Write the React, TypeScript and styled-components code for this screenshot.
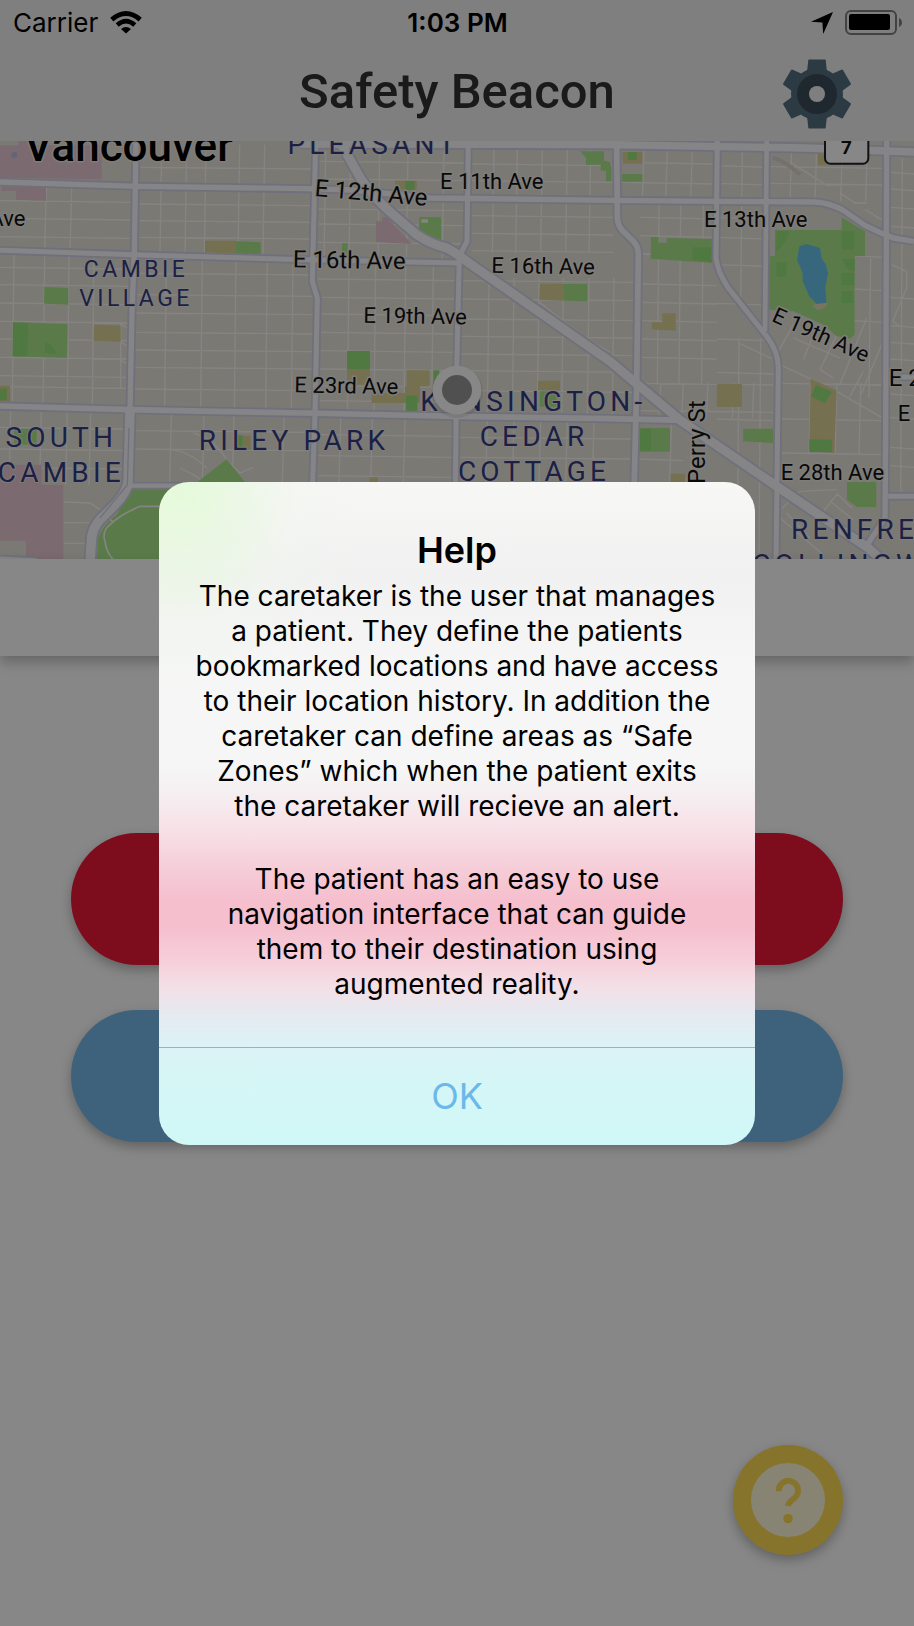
import React from "react";
import styled, { createGlobalStyle } from "styled-components";

const GlobalStyle = createGlobalStyle`
  *, *::before, *::after { box-sizing: border-box; }
  body { margin: 0; background: #fff; }
  button { border: 0; padding: 0; font: inherit; cursor: pointer; }
`;

const Screen = styled.div`
  position: relative;
  display: flex;
  flex-direction: column;
  min-height: 100vh;
  font-family: Inter, "Liberation Sans", sans-serif;
  background: #fff;
`;

const TopBar = styled.header`
  display: flex;
  flex-direction: column;
  height: 141px;
  background: #f0f0f0;
`;

const StatusBar = styled.div`
  display: grid;
  grid-template-columns: 1fr auto 1fr;
  align-items: center;
  height: 46px;
  padding: 0 12px 0 13px;
  font-size: 26px;
  line-height: 30px;
  color: #000;
`;

const StatusGroup = styled.div<{ $end?: boolean }>`
  display: flex;
  align-items: center;
  gap: 12px;
  justify-content: ${(p) => (p.$end ? "flex-end" : "flex-start")};
`;

const Clock = styled.time`
  font-weight: 600;
`;

const TitleRow = styled.div`
  display: grid;
  grid-template-columns: 1fr auto 1fr;
  align-items: center;
  flex: 1;
  padding: 0 62px;
`;

const Title = styled.h1`
  grid-column: 2;
  margin: 0;
  padding-bottom: 4px;
  font-family: Roboto, sans-serif;
  font-size: 49px;
  font-weight: 500;
  line-height: 56px;
  color: #313131;
`;

const GearButton = styled.button`
  justify-self: end;
  height: 70px;
  background: none;
`;

const MapFrame = styled.section`
  height: 418px;
  overflow: hidden;
  background: #e8e4db;

  svg {
    display: block;
    width: 100%;
    height: 100%;
  }
`;

const RoadName = styled.text<{ $size?: number }>`
  font-family: "DIN Pro", Roboto, sans-serif;
  font-size: ${(p) => p.$size ?? 66}px;
  fill: #111;
  stroke: #efece6;
  stroke-width: 9px;
  stroke-linejoin: round;
  paint-order: stroke;
`;

const AreaName = styled.text<{ $size?: number }>`
  font-family: "DIN Pro", Roboto, sans-serif;
  font-size: ${(p) => p.$size ?? 84}px;
  letter-spacing: 0.15em;
  text-anchor: middle;
  fill: #373e84;
  stroke: #efece6;
  stroke-width: 6px;
  stroke-linejoin: round;
  paint-order: stroke;
`;

const CityName = styled(RoadName)`
  font-weight: 500;
  fill: #000;
`;

const Summary = styled.section`
  height: 97px;
  background: #fff;
  box-shadow: 0 6px 12px rgba(0, 0, 0, 0.25);
`;

const Actions = styled.main`
  display: flex;
  flex-direction: column;
  gap: 45px;
  padding: 177px 71px 0;
`;

const ActionButton = styled.button<{ $color: string }>`
  height: 132px;
  border-radius: 66px;
  background: ${(p) => p.$color};
  box-shadow: 0 5px 12px rgba(0, 0, 0, 0.28);
`;

const HelpButton = styled.button`
  display: flex;
  align-items: center;
  justify-content: center;
  width: 110px;
  height: 110px;
  margin: auto 71px 71px auto;
  border-radius: 50%;
  background: #ffdb53;
  box-shadow: 0 5px 12px rgba(0, 0, 0, 0.28);
`;

const Backdrop = styled.div`
  position: absolute;
  inset: 0;
  display: flex;
  align-items: center;
  justify-content: center;
  background: rgba(0, 0, 0, 0.47);
`;

const Dialog = styled.div`
  display: flex;
  flex-direction: column;
  width: 596px;
  max-width: 90%;
  border-radius: 30px;
  overflow: hidden;
  background:
    radial-gradient(ellipse 180px 210px at 20px 10px, #e5fada 0%, rgba(232, 248, 224, 0.7) 35%, rgba(240, 247, 236, 0.35) 65%, rgba(246, 246, 246, 0) 100%),
    linear-gradient(
      #f7f7f6 0%, #f1f1f1 14%, #f6f6f6 28%, #f6f6f6 43%, #f5eff1 47%, #f7dfe6 53%,
      #f5cbd6 59%, #f5bfce 63%, #f5bfce 67%, #f6ced9 72%, #f4dfe6 76%,
      #e6e9f0 80%, #dcf2f6 85%, #d6f6f6 90%, #d0f8f7 100%
    );
`;

const DialogBody = styled.div`
  padding: 45px 36px;
  text-align: center;
  color: #000;
`;

const DialogTitle = styled.h2`
  margin: 0 0 6px;
  font-size: 36px;
  font-weight: 600;
  line-height: 46px;
`;

const DialogText = styled.p`
  margin: 0;
  font-size: 28px;
  line-height: 35px;

  & + & {
    margin-top: 38px;
  }
`;

const ConfirmButton = styled.button`
  height: 98px;
  border-top: 1px solid #6cc4d8;
  background: none;
  font-size: 36px;
  line-height: 44px;
  color: #6cb8ea;
`;

/* Arterial roads, drawn as a casing under a lighter core. */
const arterials: { d: string; w: number }[] = [
  { d: "M0 132L415 145L915 152L1060 156L1290 180L1830 187L2145 190L2445 192Q2490 195 2530 217L2595 262Q2640 285 2680 300L2742 310", w: 16 },
  { d: "M0 337L400 350L915 365L1380 375", w: 15 },
  { d: "M900 18L1830 20L2415 30L2742 42", w: 22 },
  { d: "M0 804L390 815L640 820L915 825L1370 835L1830 842L2055 847", w: 17 },
  { d: "M947 9L937 430L952 480L945 830L937 1060", w: 15 },
  { d: "M1405 9L1401 310L1378 355L1370 700L1366 1060", w: 15 },
  { d: "M1850 9L1852 240Q1854 268 1875 285L1900 310Q1915 325 1915 350L1910 740L1902 1060", w: 17 },
  { d: "M2152 9L2148 360Q2152 400 2185 450L2300 595Q2335 640 2335 690L2328 1275", w: 15 },
  { d: "M2300 9L2295 580", w: 14 },
  { d: "M2660 9L2657 880L2655 1140L2605 1215", w: 16 },
  { d: "M2665 1075L2742 1075M2700 717L2742 717", w: 15 },
  { d: "M390 1043L560 1043M0 1262L110 1267", w: 13 },
  { d: "M408 9L403 340L396 520L390 815", w: 16 },
  { d: "M390 815L384 1035Q378 1065 345 1100L300 1145Q274 1175 274 1210L270 1275", w: 28 },
  { d: "M1025 20L1080 118Q1120 180 1180 230L1250 290Q1290 318 1340 330Q1370 345 1400 370L1830 670L2045 850L2330 1045L2605 1230L2660 1280", w: 27 },
];

/* Residential streets: [left, right, top, bottom, columns, rows]. */
type Block = [number, number, number, number, number[], number[]];
const blocks: Block[] = [
  [0, 395, 150, 340, [137, 213], [190, 243, 298]],
  [0, 390, 345, 805, [40, 132, 205, 280], [390, 442, 497, 552, 605, 660, 715, 748]],
  [0, 380, 815, 1040, [30, 122, 200, 270], [870, 935, 990]],
  [415, 937, 20, 350, [483, 558, 616, 717, 792], [90, 200, 250, 300]],
  [405, 940, 360, 820, [497, 605, 706, 800, 877], [408, 472, 527, 585, 638, 690, 755]],
  [395, 940, 830, 1035, [512, 610, 700, 850], [880, 935]],
  [955, 1395, 40, 370, [975, 1050, 1137, 1222, 1330], [72, 125, 215, 260, 315]],
  [955, 1370, 380, 830, [1045, 1125, 1215, 1298], [425, 480, 530, 585, 640, 695, 745, 790]],
  [955, 1360, 840, 1035, [1020, 1115, 1213], [892, 955, 1015]],
  [1415, 1840, 35, 345, [1480, 1550, 1625, 1700, 1770], [80, 130, 235, 288, 340]],
  [1380, 1900, 420, 835, [1465, 1540, 1615, 1688, 1765, 1840], [430, 485, 545, 597, 650, 700, 760]],
  [1380, 1895, 850, 1035, [1460, 1540, 1620, 1700, 1780], [900, 960]],
  [1865, 2140, 35, 185, [1930, 2000, 2075], [75, 135]],
  [1920, 2150, 200, 740, [1975, 2040, 2108], [240, 295, 350, 440, 495, 550, 605, 660]],
  [1920, 2320, 735, 840, [1980, 2048, 2122, 2200, 2260], [738, 820]],
  [2150, 2300, 30, 500, [2225], [85, 138, 240, 300, 382, 498]],
  [2310, 2650, 30, 190, [2373, 2448, 2525, 2600], [88, 138]],
  [2560, 2650, 355, 780, [2610], [355, 455, 550]],
  [2345, 2650, 735, 950, [2430, 2508, 2580], [738, 845, 947]],
  [2670, 2742, 60, 1060, [2705], [105, 155, 210, 267, 480, 565, 615, 665, 770, 840, 930, 985]],
  [1910, 2050, 850, 1030, [2012, 2075], [965]],
  [2150, 2320, 600, 1275, [2215, 2280], [605, 705, 845]],
];

const streetPath = blocks
  .map(([l, r, t, b, cols, rows]) =>
    cols.map((x) => `M${x + 2} ${t}L${x - 3} ${b}`).join("") +
    rows.map((y) => `M${l} ${y - 2}L${r} ${y + 3}`).join(""))
  .join("");

const lanes =
  "M365 560L383 570M363 612L380 622M362 667L380 677M362 555V750M192 1092L270 1095L300 1115M192 1154H270M192 1216H260" +
  "M580 885Q640 900 680 965L720 1005L760 988M510 935Q570 940 620 990M540 990L580 1010L610 1030" +
  "M1615 490L1690 550L1765 605L1830 642M2375 75L2480 142L2525 140M2520 165L2565 195L2600 195M2595 215L2645 245" +
  "M2220 617L2315 662M2340 680L2505 757L2645 838M2335 640L2380 560M2410 664L2445 580M2380 600L2520 660M2460 695L2525 560M2460 695L2500 720M2520 738L2600 540M2585 765L2645 620M2550 775L2590 700" +
  "M2675 380L2720 400L2720 450L2678 550L2700 566M2345 1112L2400 1060L2510 1055M2360 1125L2430 1200M2470 1120L2512 1068L2555 1110M2490 1090L2560 1145M2340 1140L2470 1250";

const areas: { fill: string; d: string }[] = [
  { fill: "#e8c8d3", d: "M0 22H305V124L0 119ZM55 9H110V24H55ZM5 145H138V188L48 185V158H5ZM0 980H125V1040H190V1265H78V1208H0ZM1128 250H1147V238H1160L1235 318L1128 312Z" },
  { fill: "#ddd395", d: "M615 308H708V347L615 343ZM283 560L362 563V611L281 608ZM0 743H30V790H0ZM728 893H752V935H728ZM1041 693H1110V740H1041ZM1215 745H1220V697H1288V745H1260V795H1115V765H1215ZM1185 128H1250V155H1185ZM1620 437H1692V488L1618 485ZM1614 728H1680V757H1614ZM1108 1018H1134V1032H1108ZM1868 42H1927V77H1868ZM2453 45H2480V82H2453ZM1955 553H1987V526H2027V578L1955 574ZM2151 738H2226V807H2150ZM2432 722L2510 757L2503 945L2428 940ZM2012 1007H2055V1035H2012Z" },
  { fill: "#abe98b", d: "M708 309L782 313V350L708 347ZM133 447L205 450V500L132 497ZM39 552L203 558L201 660L37 655ZM42 872H110V920H42ZM595 1030L680 964L735 1032V1060H595ZM395 1052H520V1275H290L294 1200Q310 1160 350 1130ZM1258 237H1323V305Q1290 300 1257 280ZM1026 316H1043V350H1026ZM1692 438H1762V490L1692 488ZM1740 40H1812V68L1830 72V128H1818V98H1802V80H1758V60ZM1866 108H1927V131H1866ZM1815 72H1828L1834 85V130H1820V90ZM1953 297H1976V314H2000V300L2136 303V375L1952 362ZM2230 872H2319V915L2229 910ZM1918 870H2010V941H1918ZM2541 1032H2629V1107H2570L2541 1085ZM1619 760H1670V806H1620ZM2325 276H2525V238L2595 280V354H2564V590L2550 602L2510 595L2470 560L2380 520L2307 515V354H2325Z" },
  { fill: "#95e479", d: "M0 752H20V787H0ZM711 892H728V930H711ZM1041 639H1110V693H1041ZM1218 773H1252V820H1218ZM1300 697H1318V740H1300ZM1216 129H1243V157H1216ZM1884 42H1910V66H1884ZM2448 740L2495 762L2475 796L2433 775ZM2428 904L2496 905V942H2428ZM39 554L85 555L82 655H39ZM136 612Q160 618 168 648L134 645ZM2330 280H2370Q2350 330 2328 340ZM2526 280H2562V335H2526ZM2330 372H2360V416H2330ZM2525 362H2564V400L2540 392ZM2525 405H2563V442H2525ZM2525 460H2560V495H2525ZM2078 328H2135V372L2078 365ZM1920 872H1953V938H1920Z" },
];

const roadNames: { text: string; x: number; y: number; turn?: number; size?: number }[] = [
  { text: "Ave", x: -32, y: 265 },
  { text: "E 11th Ave", x: 1320, y: 153 },
  { text: "E 12th Ave", x: 943, y: 174, turn: 5, size: 72 },
  { text: "E 16th Ave", x: 878, y: 388, turn: 1, size: 72 },
  { text: "E 16th Ave", x: 1474, y: 404, turn: 1 },
  { text: "E 19th Ave", x: 1090, y: 554, turn: 1 },
  { text: "E 23rd Ave", x: 883, y: 763, turn: 1 },
  { text: "E 13th Ave", x: 2112, y: 268 },
  { text: "E 28th Ave", x: 2342, y: 1026 },
  { text: "E 19th Ave", x: 2312, y: 548, turn: 24 },
  { text: "E 22nd Ave", x: 2666, y: 745, size: 72 },
  { text: "E 24th Ave", x: 2693, y: 850 },
  { text: "Perry St", x: 2116, y: 1038, turn: -90, size: 72 },
];

const areaNames: { text: string; x: number; y: number; size?: number }[] = [
  { text: "PLEASANT", x: 1120, y: 48 },
  { text: "CAMBIE", x: 408, y: 416, size: 69 },
  { text: "VILLAGE", x: 408, y: 504, size: 69 },
  { text: "SOUTH", x: 184, y: 928 },
  { text: "CAMBIE", x: 184, y: 1032 },
  { text: "RILEY PARK", x: 882, y: 936 },
  { text: "KENSINGTON-", x: 1600, y: 820 },
  { text: "CEDAR", x: 1602, y: 924 },
  { text: "COTTAGE", x: 1602, y: 1028 },
  { text: "RENFREW-", x: 2624, y: 1203 },
  { text: "COLLINGWOOD", x: 2620, y: 1308 },
];

const CityMap = () => (
  <svg viewBox="0 9 2742 1254" preserveAspectRatio="xMidYMid slice" role="img" aria-label="Map of Vancouver">
    <path d={streetPath + lanes} fill="none" stroke="#fbfaf6" strokeWidth="4" />
    {areas.map((a) => <path key={a.fill} d={a.d} fill={a.fill} />)}
    <path d="M2318 60Q2350 65 2400 110" fill="none" stroke="#dcd6c8" strokeWidth="12" />
    <path d="M1264 244H1284V254H1264Z" fill="#fbfaf6" />
    <path d="M480 1105H420Q360 1130 330 1160Q305 1180 315 1210Q320 1245 340 1265M330 1145L342 1153" fill="none" stroke="#fbfaf6" strokeWidth="5" />
    <path d="M2437 503L2450 515Q2475 518 2483 495L2460 490Z" fill="#e0dbb8" />
    <path d="M2398 325L2420 318L2460 330L2465 360L2478 380L2484 405L2476 450L2480 494L2450 498L2428 475L2408 430V408L2400 385L2391 368Z" fill="#69c2ec" />
    {arterials.map((r) => (
      <path key={r.d} d={r.d} fill="none" stroke="#d2d4e8" strokeWidth={r.w + 11} strokeLinejoin="round" />
    ))}
    {arterials.map((r) => (
      <path key={r.d} d={r.d} fill="none" stroke="#fcfcff" strokeWidth={r.w} strokeLinejoin="round" />
    ))}
    <path d="M387 870L382 1040L300 1140" fill="none" stroke="#d2d4e8" strokeWidth="4" />
    <circle cx="43" cy="51" r="9" fill="#b5bfe0" />
    <CityName x="72" y="68" $size={132}>Vancouver</CityName>
    {areaNames.map((n) => (
      <AreaName key={n.text + n.y} x={n.x} y={n.y} $size={n.size}>{n.text}</AreaName>
    ))}
    {roadNames.map((n) => (
      <RoadName key={n.text + n.x} x={n.x} y={n.y} $size={n.size} transform={n.turn ? `rotate(${n.turn} ${n.x} ${n.y})` : undefined}>
        {n.text}
      </RoadName>
    ))}
    <rect x="2475" y="-40" width="130" height="117" rx="16" fill="#fff" stroke="#222" strokeWidth="6" />
    <text x="2539" y="48" textAnchor="middle" fontFamily="Roboto, sans-serif" fontSize="57" fontWeight="700" fill="#111">7</text>
    <circle cx="1371" cy="762" r="78" fill="#000" opacity="0.08" />
    <circle cx="1371" cy="756" r="73" fill="#fff" />
    <circle cx="1371" cy="756" r="45" fill="#989898" />
  </svg>
);

const WifiIcon = () => (
  <svg width="32" height="24" viewBox="0 0 32 24" aria-hidden="true">
    <path d="M16 22.5L11 18Q16 14 21 18Z" />
    <path d="M7.2 14Q16 6.2 24.8 14" fill="none" stroke="#000" strokeWidth="4.4" />
    <path d="M1.8 8.6Q16 -3.6 30.2 8.6" fill="none" stroke="#000" strokeWidth="4.8" />
  </svg>
);

const LocationIcon = () => (
  <svg width="22" height="22" viewBox="0 0 22 22" aria-hidden="true">
    <path d="M22 0L12.2 22L11.4 10.6L0 9.8Z" />
  </svg>
);

const BatteryIcon = () => (
  <svg width="57" height="26" viewBox="0 0 57 26" aria-hidden="true">
    <rect x="1" y="1" width="50" height="23" rx="5" fill="none" stroke="#7d7d7d" strokeWidth="2" />
    <rect x="4" y="4" width="41" height="16" rx="2" />
    <path d="M54 8Q57 9.5 57 12.5Q57 15.5 54 17Z" fill="#7d7d7d" />
  </svg>
);

const GearIcon = () => (
  <svg width="70" height="70" viewBox="-35 -35 70 70" aria-hidden="true">
    {[0, 60, 120, 180, 240, 300].map((a) => (
      <path key={a} transform={`rotate(${a})`} d="M-10 -22L-8.7 -33.8Q-8.6 -34.5 -7.9 -34.5H7.9Q8.6 -34.5 8.7 -33.8L10 -22Z" fill="#53707f" />
    ))}
    <circle r="26" fill="#53707f" />
    <circle r="14" fill="none" stroke="#3e4d59" strokeWidth="12" />
    <circle r="8" fill="#f0f0f0" />
  </svg>
);

const QuestionIcon = () => (
  <svg width="74" height="74" viewBox="0 0 74 74" aria-hidden="true">
    <circle cx="37" cy="37" r="37" fill="#fff9db" />
    <path d="M27.8 28.2A9.6 9.6 0 1 1 43.4 35C40 38 37.2 39.6 37 43.2" fill="none" stroke="#ffdb53" strokeWidth="6" />
    <circle cx="37" cy="55.5" r="4.8" fill="#ffdb53" />
  </svg>
);

export default function App() {
  return (
    <>
      <GlobalStyle />
      <Screen>
        <TopBar>
          <StatusBar>
            <StatusGroup>
              <span>Carrier</span>
              <WifiIcon />
            </StatusGroup>
            <Clock>1:03 PM</Clock>
            <StatusGroup $end>
              <LocationIcon />
              <BatteryIcon />
            </StatusGroup>
          </StatusBar>
          <TitleRow>
            <Title>Safety Beacon</Title>
            <GearButton type="button" aria-label="Settings">
              <GearIcon />
            </GearButton>
          </TitleRow>
        </TopBar>
        <MapFrame>
          <CityMap />
        </MapFrame>
        <Summary />
        <Actions>
          <ActionButton type="button" aria-label="Caretaker" $color="#ec1735" />
          <ActionButton type="button" aria-label="Patient" $color="#75b9e8" />
        </Actions>
        <HelpButton type="button" aria-label="Help">
          <QuestionIcon />
        </HelpButton>
        <Backdrop>
          <Dialog role="alertdialog" aria-modal="true" aria-labelledby="help-title">
            <DialogBody>
              <DialogTitle id="help-title">Help</DialogTitle>
              <DialogText>
                The caretaker is the user that manages a patient. They define the patients bookmarked
                locations and have access to their location history. In addition the caretaker can
                define areas as “Safe Zones” which when the patient exits the caretaker will recieve
                an alert.
              </DialogText>
              <DialogText>
                The patient has an easy to use navigation interface that can guide them to their
                destination using augmented reality.
              </DialogText>
            </DialogBody>
            <ConfirmButton type="button">OK</ConfirmButton>
          </Dialog>
        </Backdrop>
      </Screen>
    </>
  );
}
